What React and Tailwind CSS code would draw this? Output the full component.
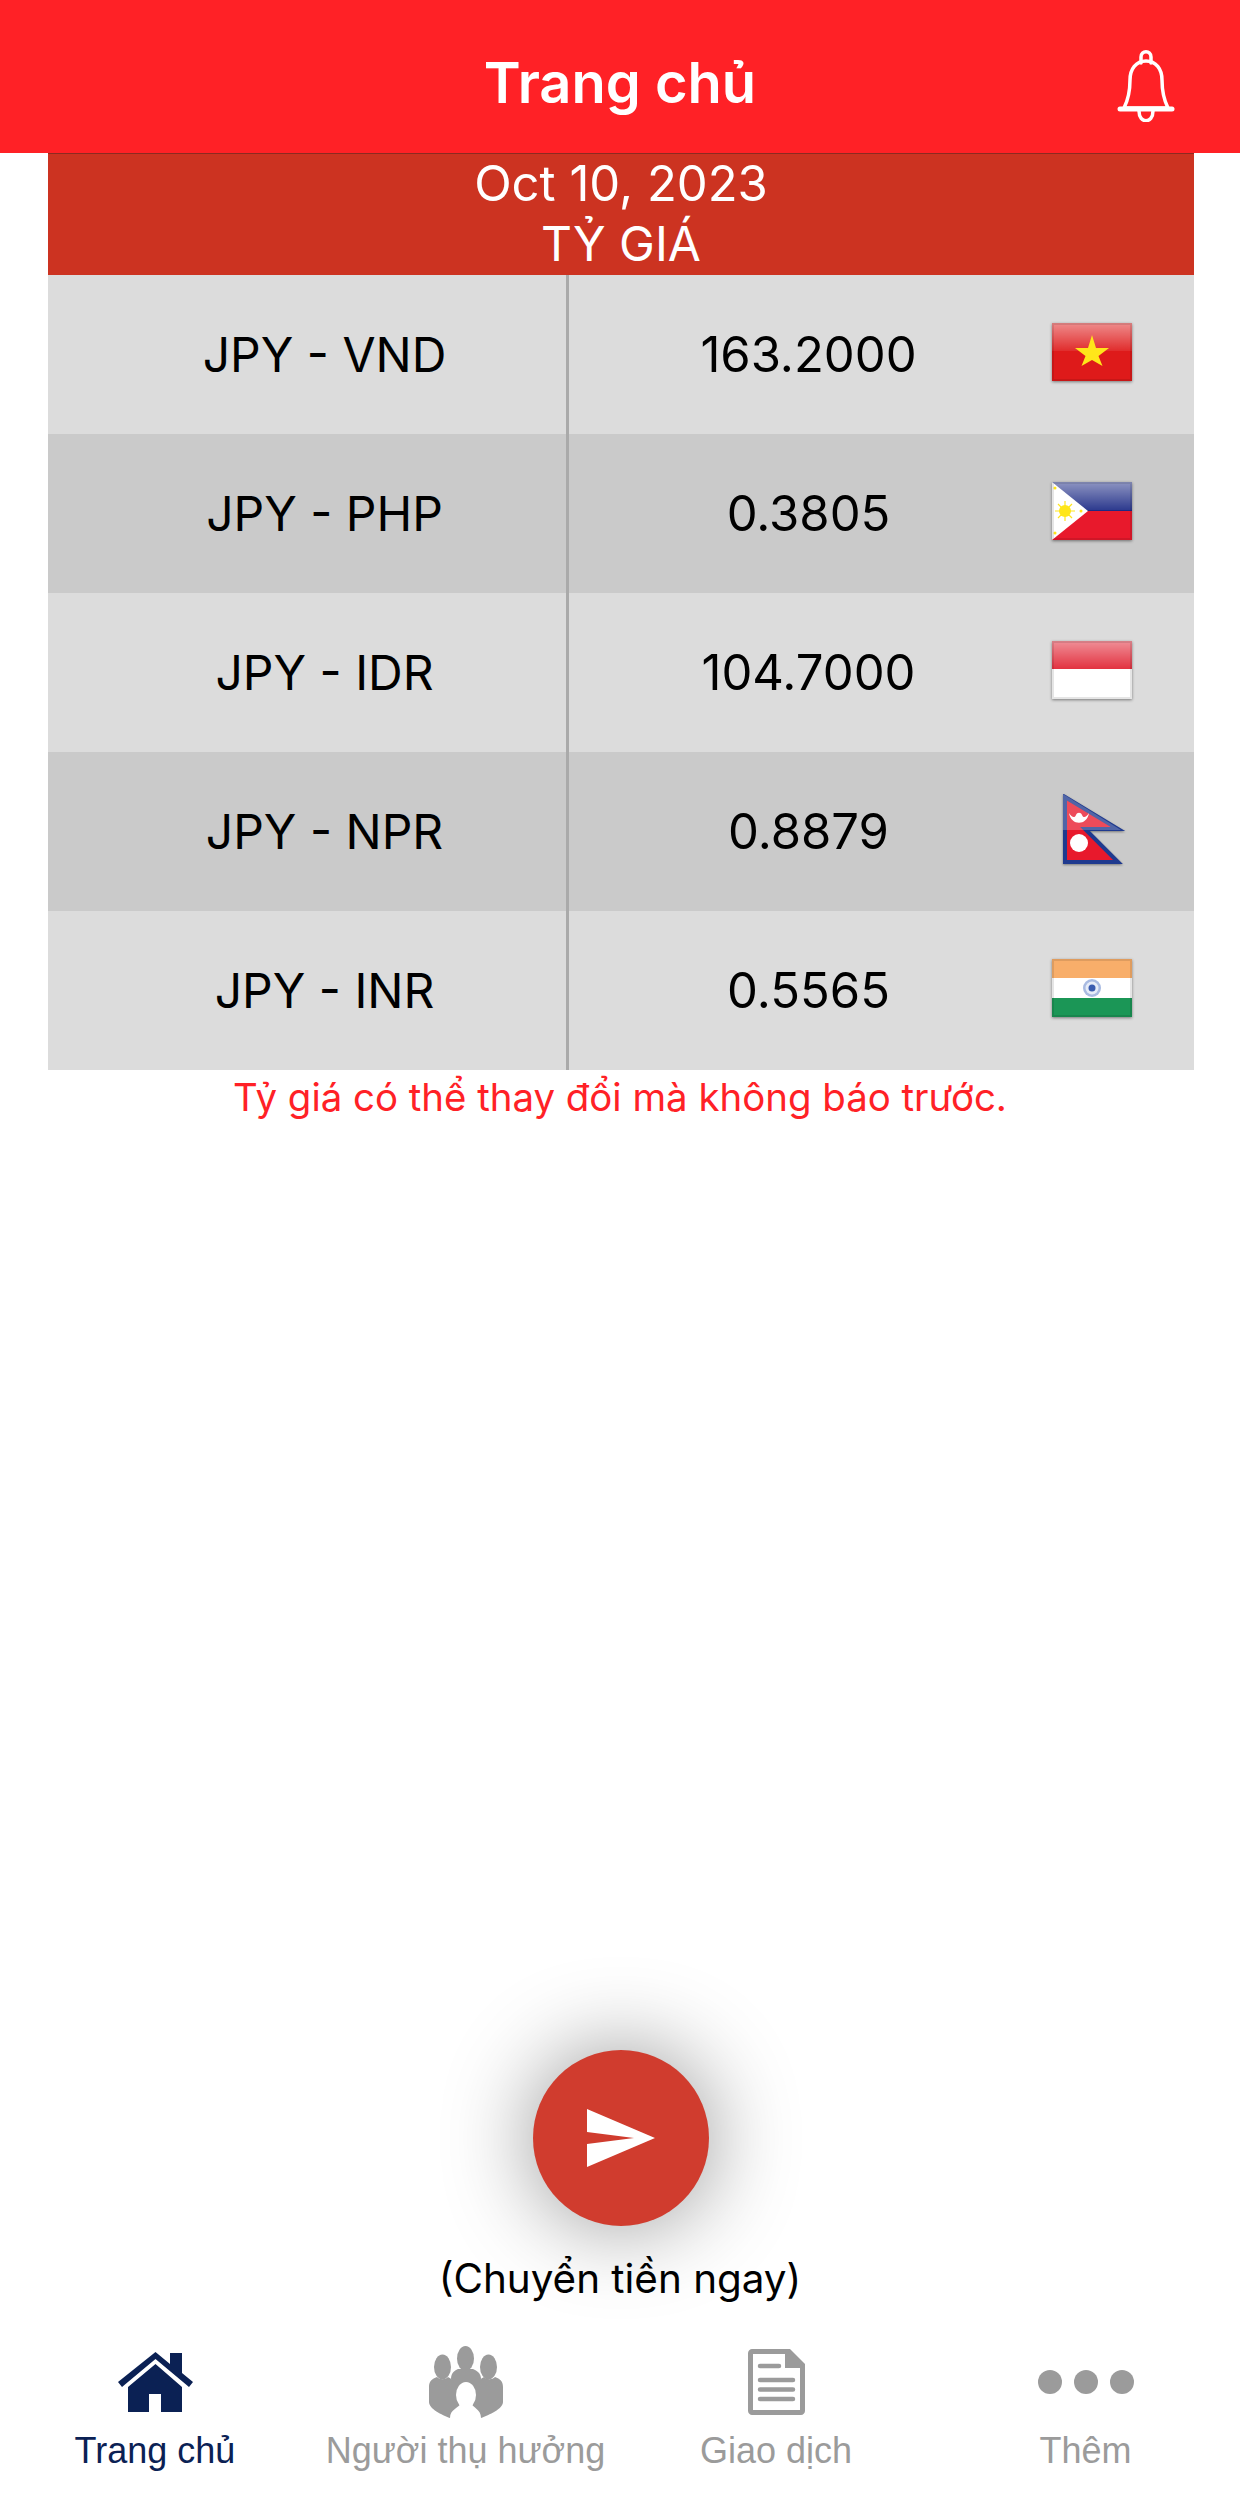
const rates = [
  { pair: "JPY - VND", value: "163.2000", flag: "vn" },
  { pair: "JPY - PHP", value: "0.3805", flag: "ph" },
  { pair: "JPY - IDR", value: "104.7000", flag: "id" },
  { pair: "JPY - NPR", value: "0.8879", flag: "np" },
  { pair: "JPY - INR", value: "0.5565", flag: "in" },
];

// top half shine that all the flag images have
const Gloss = ({ height = 28 }) => (
  <>
    <defs>
      <linearGradient id="gloss" x1="0" y1="0" x2="0" y2="1">
        <stop offset="0" stopColor="#fff" stopOpacity="0.5" />
        <stop offset="1" stopColor="#fff" stopOpacity="0.08" />
      </linearGradient>
    </defs>
    <rect x="0" y="0" width="80" height={height} fill="url(#gloss)" />
  </>
);

const Flag = ({ code }) => {
  if (code === "np") {
    return (
      <svg width="80" height="71" viewBox="0 0 80 71" className="drop-shadow-[0_1px_1px_rgba(0,0,0,0.4)]">
        <path d="M13 3 L66 35 L33 35 L66 68 L13 68 Z" fill="#e8192c" stroke="#1f3a8f" strokeWidth="4" />
        <path d="M11 0 L69 36 L11 36 Z" fill="#fff" opacity="0.22" />
        <path d="M17 19 C19 32 35 32 37 19 C34 24 31 24 30 21 C29 18 25 18 24 21 C23 24 20 24 17 19 Z" fill="#fff" />
        <circle cx="27" cy="49" r="9" fill="#fff" />
      </svg>
    );
  }
  return (
    <svg width="80" height="58" viewBox="0 0 80 58" className="drop-shadow-[0_1.5px_1.5px_rgba(0,0,0,0.45)]">
      {code === "vn" && (
        <>
          <rect width="80" height="58" fill="#de1a1a" />
          <Gloss />
          <path d="M40 12 L44 25 L57 25 L46.500 33 L50.500 43 L40 37 L29.500 43 L33.500 33 L23 25 L36 25 Z" fill="#ffe61a" />
        </>
      )}
      {code === "ph" && (
        <>
          <rect width="80" height="29" fill="#1c2a85" />
          <rect y="29" width="80" height="29" fill="#e8192c" />
          <Gloss />
          <path d="M0 0 L36 29 L0 58 Z" fill="#fff" />
          <circle cx="13" cy="29" r="6" fill="#ffe61a" />
          <path d="M13 19 V39 M3 29 H23 M6 22 L20 36 M20 22 L6 36" stroke="#ffe61a" strokeWidth="1.2" />
          <circle cx="3" cy="6" r="1.500" fill="#ffe61a" />
          <circle cx="3" cy="51" r="1.500" fill="#ffe61a" />
          <circle cx="29" cy="29" r="1.500" fill="#ffe61a" />
        </>
      )}
      {code === "id" && (
        <>
          <rect width="80" height="28" fill="#e02030" />
          <rect y="28" width="80" height="30" fill="#fff" />
          <Gloss />
        </>
      )}
      {code === "in" && (
        <>
          <rect width="80" height="19" fill="#f79a45" />
          <rect y="19" width="80" height="20" fill="#fff" />
          <rect y="39" width="80" height="19" fill="#1b9656" />
          <rect width="80" height="19" fill="#fff" opacity="0.2" />
          <circle cx="40" cy="29" r="9" fill="#a9bbe2" />
          <circle cx="40" cy="29" r="6.500" fill="#e6ecf8" />
          <circle cx="40" cy="29" r="3.500" fill="#3a5cb0" />
        </>
      )}
      <rect x="1" y="1" width="78" height="56" fill="none" stroke="#000" strokeOpacity="0.1" strokeWidth="2" />
    </svg>
  );
};

const Row = ({ rate, index }) => (
  <div className={`flex h-[159px] items-center text-black ${index % 2 === 0 ? "bg-[#dcdcdc]" : "bg-[#cacaca]"}`}>
    <div className="flex h-full w-[518px] items-center justify-center pl-[35px] text-[48px]">{rate.pair}</div>
    <div className="h-full w-[3px] bg-[#aaaaaa]" />
    <div className="flex h-full flex-1 items-center">
      <div className="w-[483px] pr-[4px] text-center text-[49px]">{rate.value}</div>
      <div className="mb-[5px] flex w-[80px] justify-center">
        <Flag code={rate.flag} />
      </div>
    </div>
  </div>
);

const BellIcon = () => (
  <svg width="58" height="72" viewBox="0 0 58 72" fill="none" stroke="#fff" strokeWidth="3.500" strokeLinejoin="round" strokeLinecap="round">
    <path d="M24 13 V7 C24 0 34 0 34 7 V13" />
    <path d="M29 11 C19 11 13 19 13 30 C13 42 11 50 7 58 H51 C47 50 45 42 45 30 C45 19 39 11 29 11 Z" />
    <path d="M3 59 H55" strokeWidth="5" />
    <path d="M22 61 C22 74 36 74 36 61" />
  </svg>
);

const HomeIcon = () => (
  <svg width="75" height="60" viewBox="0 0 75 60" fill="#0b2154">
    <path d="M37.500 0 L52 12 V1 H64 V21 L75 30 L71 35 L37.500 7 L4 35 L0 30 Z" />
    <path d="M37.500 12 L64 35 V60 H43 V42 H31 V60 H10 V35 Z" />
  </svg>
);

const PeopleIcon = () => (
  <svg width="74" height="72" viewBox="0 0 74 72" fill="#9b9b9b">
    <ellipse cx="36.500" cy="12.500" rx="8.500" ry="12.500" />
    <ellipse cx="13.500" cy="21" rx="8.500" ry="12.500" />
    <ellipse cx="59.500" cy="21" rx="8.500" ry="12.500" />
    <path d="M29 23 C25 25 22 27 22 33 L24 36 H50 L52 33 C52 27 48 25 44 23 Z" />
    <path d="M8 31 C11 34 16 34 19 31 L24 34 H50 L55 31 C58 34 63 34 66 31 C71 33 74 35 74 41 V56 C74 63 60 69 52 72 H21 C13 69 0 63 0 56 V41 C0 35 3 33 8 31 Z" />
    <ellipse cx="37" cy="49" rx="10" ry="13" fill="#fff" />
    <path d="M31 58 H43 C44 62 52 63 52 72 H21 C21 63 30 62 31 58 Z" fill="#fff" />
  </svg>
);

const DocIcon = () => (
  <svg width="57" height="66" viewBox="0 0 57 66" fill="none">
    <path d="M4 0 H42 L57 15 V62 C57 64 55 66 53 66 H4 C2 66 0 64 0 62 V4 C0 2 2 0 4 0 Z" fill="#9b9b9b" />
    <path d="M5 5 H37 V19 H52 V61 H5 Z" fill="#fff" />
    <path d="M12 17 H31 M12 31 H45 M12 40.500 H45 M12 50 H45" stroke="#9b9b9b" strokeWidth="4.500" strokeLinecap="round" />
  </svg>
);

const DotsIcon = () => (
  <div className="flex gap-[12px] blur-[0.6px]">
    <div className="h-[24px] w-[24px] rounded-full bg-[#9b9b9b]" />
    <div className="h-[24px] w-[24px] rounded-full bg-[#9b9b9b]" />
    <div className="h-[24px] w-[24px] rounded-full bg-[#9b9b9b]" />
  </div>
);

const tabs = [
  { label: "Trang chủ", icon: <HomeIcon />, active: true, width: "w-[310px]" },
  { label: "Người thụ hưởng", icon: <PeopleIcon />, width: "w-[311px]" },
  { label: "Giao dịch", icon: <DocIcon />, width: "w-[310px]" },
  { label: "Thêm", icon: <DotsIcon />, width: "w-[309px]" },
];

export default function App() {
  return (
    <div className="flex h-[2504px] w-[1240px] flex-col bg-white font-['Inter',sans-serif]">
      <header className="relative flex h-[153px] shrink-0 items-center justify-center bg-[#ff2126] pt-[12px]">
        <h1 className="text-[56px] font-semibold text-white">Trang chủ</h1>
        <div className="absolute right-[65px] top-[50px]">
          <BellIcon />
        </div>
      </header>

      <div className="ml-[48px] mr-[46px] shrink-0">
        <div className="flex h-[122px] flex-col items-center justify-center border-t border-[#8c2a20] bg-[#cc3321] pb-[2px] text-[48px] leading-[60px] text-white">
          <div className="text-[49px]">Oct 10, 2023</div>
          <div>TỶ GIÁ</div>
        </div>
        {rates.map((rate, index) => (
          <Row key={rate.pair} rate={rate} index={index} />
        ))}
      </div>
      <p className="-mt-[1px] text-center text-[38.4px] text-[#ff2126]">Tỷ giá có thể thay đổi mà không báo trước.</p>

      <div className="flex flex-1 flex-col items-center justify-end">
        <button className="ml-[1px] flex h-[176px] w-[176px] items-center justify-center rounded-full bg-[#d03c2e] shadow-[0_0_90px_rgba(0,0,0,0.42)]">
          <svg width="68" height="58" viewBox="0 0 68 58" fill="#fff">
            <path d="M0 0 L68 29 L0 58 V35 L47 29 L0 23 Z" />
          </svg>
        </button>
        <div className="mt-[28px] text-[40.4px] leading-[50px] text-black">(Chuyển tiền ngay)</div>
      </div>

      <nav className="flex h-[200px] shrink-0 pt-[38px] font-['Liberation_Sans',sans-serif]">
        {tabs.map((tab) => (
          <div key={tab.label} className={`flex flex-col items-center ${tab.width}`}>
            <div className="flex h-[80px] items-center justify-center">{tab.icon}</div>
            <div className={`mt-[7px] text-[36px] leading-[44px] ${tab.active ? "text-[#0b2154]" : "text-[#9b9b9b]"}`}>{tab.label}</div>
          </div>
        ))}
      </nav>
    </div>
  );
}
